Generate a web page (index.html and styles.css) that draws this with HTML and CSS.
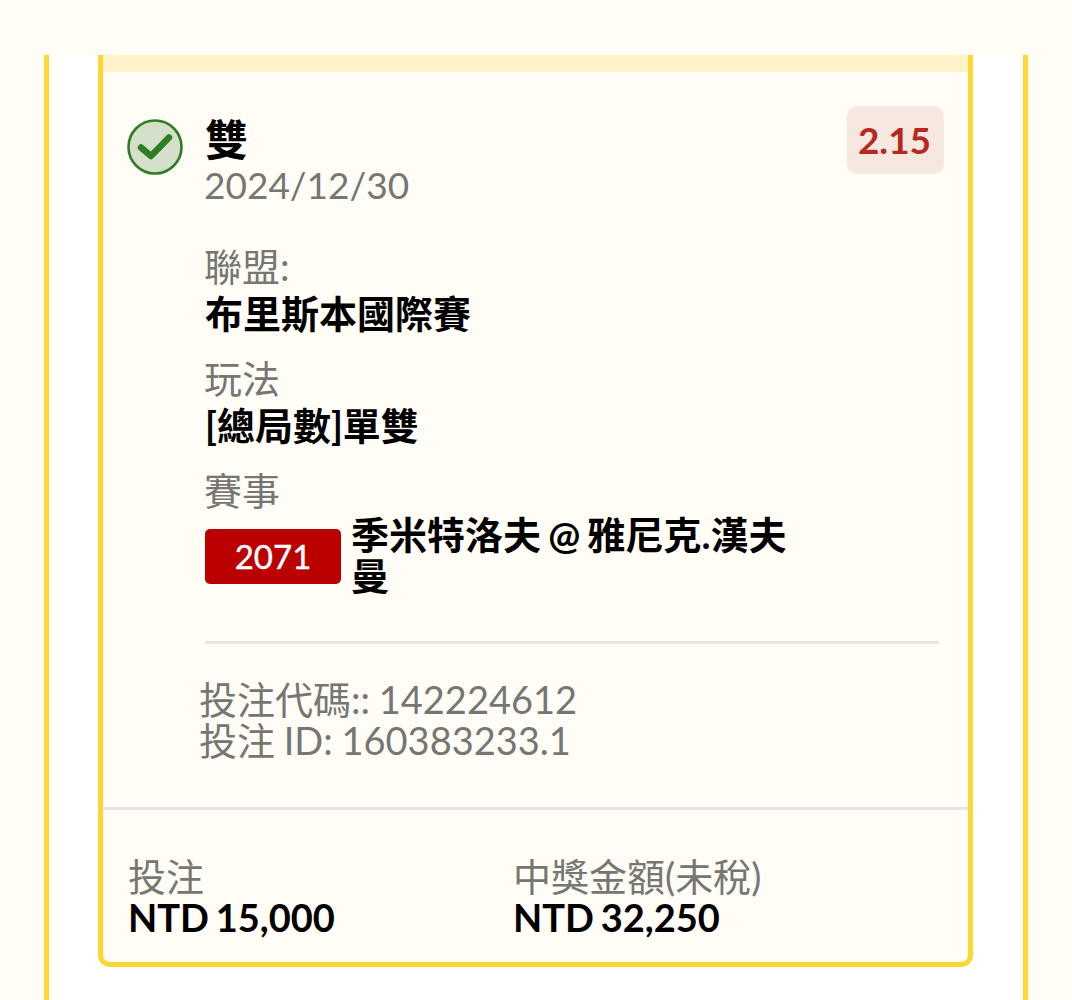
FILE: index.html
```html
<!DOCTYPE html>
<html lang="zh-Hant">
<head>
  <meta charset="UTF-8" />
  <meta name="viewport" content="width=device-width, initial-scale=1.0" />
  <title>投注</title>
  <link rel="stylesheet" href="styles.css">
</head>
<body>
  <div class="panel">
    <div class="card">
      <div class="card-stripe"></div>

      <div class="card-body">
        <div class="pick">
          <svg class="pick-icon" viewBox="0 0 56 56" aria-hidden="true">
            <circle cx="28" cy="28" r="26.5" fill="#d5e0cb" stroke="#2f7d22" stroke-width="2.6" />
            <path d="M14 28.5 L24 37 L42 18.5" fill="none" stroke="#2f7d22" stroke-width="6.5" stroke-linecap="round" stroke-linejoin="round" />
          </svg>
          <div class="pick-main">
            <div class="pick-name">雙</div>
            <div class="pick-date">2024/12/30</div>
          </div>
          <div class="odds">2.15</div>
        </div>

        <div class="field">
          <div class="field-label">聯盟:</div>
          <div class="field-value">布里斯本國際賽</div>
        </div>
        <div class="field">
          <div class="field-label">玩法</div>
          <div class="field-value">[總局數]單雙</div>
        </div>
        <div class="field">
          <div class="field-label">賽事</div>
          <div class="match">
            <span class="match-code">2071</span>
            <span class="match-name">季米特洛夫 @ 雅尼克.漢夫曼</span>
          </div>
        </div>

        <div class="divider"></div>
        <div class="meta">
          <div>投注代碼:: 142224612</div>
          <div>投注 ID: 160383233.1</div>
        </div>
      </div>

      <div class="totals">
        <div class="total">
          <div class="total-label">投注</div>
          <div class="total-value">NTD 15,000</div>
        </div>
        <div class="total">
          <div class="total-label">中獎金額(未稅)</div>
          <div class="total-value">NTD 32,250</div>
        </div>
      </div>
    </div>
  </div>
</body>
</html>
```

FILE: styles.css
```css
:root {
  --bg-color: #fffdf5;
  --yellow: #ffd633;
  --stripe: #fff3c9;
  --grey: #767672;
  --line: #e6e5df;
}
html, body {
  height: 1000px;
  overflow: hidden;
}
body {
  margin: 0;
  padding-top: 55px;
  box-sizing: border-box;
  background: var(--bg-color);
  color: #000;
  font-family: Lato, "Noto Sans CJK TC", sans-serif;
}
.panel {
  margin: 0 44px;
  height: 945px;
  padding: 0 50px 0 49px;
  box-sizing: border-box;
  background: #fff;
  border-left: 5px solid var(--yellow);
  border-right: 5px solid var(--yellow);
}
.card {
  height: 912px;
  box-sizing: border-box;
  background: var(--bg-color);
  border: 5px solid var(--yellow);
  border-top: none;
  border-radius: 0 0 12px 12px;
  display: flex;
  flex-direction: column;
}
.card-stripe {
  height: 17px;
  flex-shrink: 0;
  background: var(--stripe);
}
.card-body {
  flex: 1;
  padding: 34px 24px 0 25px;
}
.pick {
  display: flex;
  align-items: flex-start;
}
.pick-icon {
  width: 56px;
  height: 56px;
  margin-top: 13px;
  margin-left: -1px;
  flex-shrink: 0;
}
.pick-main {
  flex: 1;
  margin-left: 21px;
}
.pick-name {
  font-size: 43px;
  font-weight: 700;
  line-height: 48px;
  margin-top: 10px;
  margin-left: 1px;
}
.pick-date {
  font-size: 37px;
  line-height: 44px;
  margin-top: -1px;
  color: var(--grey);
}
.odds {
  width: 97px;
  height: 68px;
  box-sizing: border-box;
  padding-right: 2px;
  border-radius: 10px;
  background: #f6e7e1;
  color: #b7281f;
  font-size: 37px;
  font-weight: 700;
  line-height: 68px;
  text-align: center;
}
.field {
  margin-left: 77px;
  margin-top: 36px;
}
.field + .field {
  margin-top: 18px;
}
.field-label {
  font-size: 38px;
  line-height: 47px;
  margin-left: -1px;
  color: var(--grey);
}
.field-value {
  font-size: 38px;
  font-weight: 700;
  line-height: 47px;
}
.match {
  display: flex;
  align-items: flex-start;
  width: 590px;
}
.match-code {
  flex-shrink: 0;
  width: 136px;
  height: 55px;
  margin-top: 15px;
  border-radius: 5px;
  background: #bb0000;
  color: #fff;
  font-size: 33px;
  line-height: 55px;
  text-align: center;
  -webkit-text-stroke: 0.4px #fff;
}
.match-name {
  margin-left: 10px;
  font-size: 38px;
  font-weight: 700;
  line-height: 41px;
  word-spacing: -2px;
}
.divider {
  margin: 45px 5px 0 77px;
  border-top: 3px solid var(--line);
}
.meta {
  margin: 35px 0 0 71px;
  font-size: 38px;
  line-height: 41px;
  word-spacing: -1px;
  color: var(--grey);
}
.totals {
  display: flex;
  height: 155px;
  flex-shrink: 0;
  box-sizing: border-box;
  padding: 46px 0 0 25px;
  border-top: 3px solid var(--line);
}
.total {
  width: 385px;
}
.total-label {
  font-size: 38px;
  line-height: 41px;
  color: var(--grey);
}
.total-value {
  font-size: 38px;
  font-weight: 700;
  line-height: 40px;
  word-spacing: -2.5px;
}
```
